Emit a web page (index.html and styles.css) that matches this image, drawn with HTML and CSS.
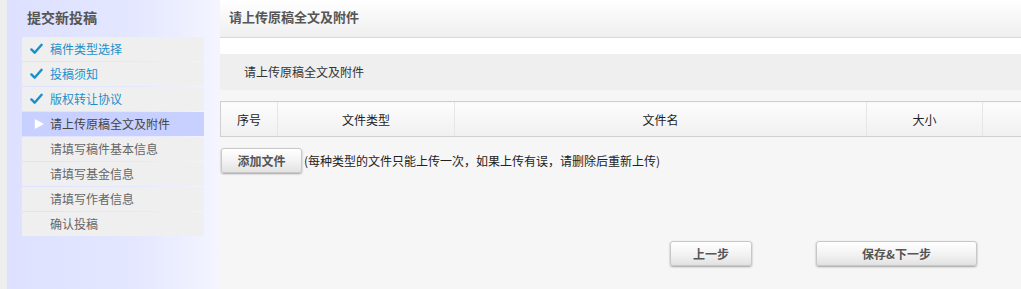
FILE: index.html
```html
<!DOCTYPE html>
<html lang="zh">
<head>
<meta charset="utf-8">
<title>提交新投稿</title>
<link rel="stylesheet" href="styles.css">
</head>
<body>
<div class="page">
  <div class="strip"></div>
  <aside class="sidebar">
    <h2 class="side-title">提交新投稿</h2>
    <ul class="steps">
      <li class="step done"><svg class="ico" viewBox="0 0 14 12"><path d="M1.5 6.5 L5 10 L12.5 1.5" fill="none" stroke="#1a8fcb" stroke-width="2.6" stroke-linecap="round" stroke-linejoin="round"/></svg><span>稿件类型选择</span></li>
      <li class="step done"><svg class="ico" viewBox="0 0 14 12"><path d="M1.5 6.5 L5 10 L12.5 1.5" fill="none" stroke="#1a8fcb" stroke-width="2.6" stroke-linecap="round" stroke-linejoin="round"/></svg><span>投稿须知</span></li>
      <li class="step done"><svg class="ico" viewBox="0 0 14 12"><path d="M1.5 6.5 L5 10 L12.5 1.5" fill="none" stroke="#1a8fcb" stroke-width="2.6" stroke-linecap="round" stroke-linejoin="round"/></svg><span>版权转让协议</span></li>
      <li class="step active"><svg class="ico" viewBox="0 0 14 12"><path d="M3 0.5 L13 6 L3 11.5 Z" fill="#ffffff"/></svg><span>请上传原稿全文及附件</span></li>
      <li class="step"><span class="ico"></span><span>请填写稿件基本信息</span></li>
      <li class="step"><span class="ico"></span><span>请填写基金信息</span></li>
      <li class="step"><span class="ico"></span><span>请填写作者信息</span></li>
      <li class="step"><span class="ico"></span><span>确认投稿</span></li>
    </ul>
  </aside>
  <main class="main">
    <div class="main-head">请上传原稿全文及附件</div>
    <div class="panel-head">请上传原稿全文及附件</div>
    <table class="files">
      <thead>
        <tr>
          <th class="c1">序号</th>
          <th class="c2">文件类型</th>
          <th class="c3">文件名</th>
          <th class="c4">大小</th>
          <th class="c5"></th>
        </tr>
      </thead>
    </table>
    <div class="add-row">
      <button class="btn btn-add">添加文件</button>
      <span class="hint">(每种类型的文件只能上传一次，如果上传有误，请删除后重新上传)</span>
    </div>
    <div class="nav-row">
      <button class="btn btn-prev">上一步</button>
      <button class="btn btn-next">保存&amp;下一步</button>
    </div>
  </main>
</div>
</body>
</html>
```

FILE: styles.css
```css
* { box-sizing: border-box; }
html, body { margin: 0; padding: 0; }
body {
  font-family: "Noto Sans CJK SC", "Liberation Sans", sans-serif;
  font-size: 12px;
  color: #333;
  background: #f6f6f6;
}
.page {
  display: flex;
  height: 289px;
  overflow: hidden;
}
.strip {
  width: 7px;
  flex: none;
  background: #eeeeee;
}
.sidebar {
  width: 213px;
  flex: none;
  background: linear-gradient(to right, #dde1ff 0%, #e4e7ff 60%, #f4f5ff 100%);
  padding: 0 16px 0 15px;
}
.side-title {
  margin: 0;
  height: 37px;
  line-height: 34px;
  padding-left: 5px;
  font-size: 14px;
  font-weight: bold;
  color: #555;
}
.steps {
  list-style: none;
  margin: 0;
  padding: 0;
  display: flex;
  flex-direction: column;
  gap: 1px;
}
.step {
  height: 24px;
  background: #efefef;
  display: flex;
  align-items: center;
  color: #666;
  line-height: 24px;
}
.step .ico {
  width: 13px;
  height: 12px;
  margin-left: 8px;
  margin-right: 7px;
  flex: none;
  display: block;
}
.step.done { color: #1a8fcb; }
.step.active { background: #c8d0ff; color: #444; }
.step.active .ico { margin-left: 10px; margin-right: 5px; }

.main {
  flex: 1;
  min-width: 0;
  display: flex;
  flex-direction: column;
}
.main-head {
  height: 38px;
  background: linear-gradient(to bottom, #ffffff 0%, #efefef 100%);
  border-bottom: 1px solid #d8d8d8;
  padding-left: 9px;
  line-height: 34px;
  font-size: 13px;
  font-weight: bold;
  color: #555;
}
.panel-head {
  margin-top: 16px;
  height: 36px;
  background: #efefef;
  padding-left: 24px;
  line-height: 36px;
  color: #333;
  box-shadow: 0 -16px 0 0 #ffffff;
}
.files {
  margin-top: 11px;
  width: 100%;
  border-collapse: collapse;
  table-layout: fixed;
}
.files th {
  height: 35px;
  font-weight: normal;
  color: #222;
  background: linear-gradient(to bottom, #fdfdfd 0%, #f0f0f0 100%);
  border-top: 1px solid #d0d0d0;
  border-bottom: 1px solid #d0d0d0;
  border-left: 1px solid #e6e6e6;
  padding: 0;
  text-align: center;
}
.files th.c1 { width: 57px; border-left: 1px solid #d0d0d0; }
.files th.c2 { width: 177px; }
.files th.c3 { width: 412px; }
.files th.c4 { width: 116px; }

.add-row {
  display: flex;
  align-items: center;
  margin-top: 11px;
  padding-left: 1px;
  gap: 2px;
}
.btn {
  font-family: "Noto Sans CJK SC", "Liberation Sans", sans-serif;
  font-size: 12px;
  font-weight: bold;
  color: #555;
  height: 25px;
  padding: 0;
  border: 1px solid #c8c8c8;
  border-radius: 3px;
  background: linear-gradient(to bottom, #ffffff 0%, #f2f2f2 55%, #e2e2e2 100%);
  box-shadow: 0 1px 2px rgba(0,0,0,0.35);
  cursor: pointer;
}
.btn-add { width: 81px; }
.hint { color: #222; }
.nav-row {
  display: flex;
  margin-top: 68px;
  padding-left: 450px;
  gap: 64px;
}
.btn-prev { width: 82px; }
.btn-next { width: 161px; }
```
